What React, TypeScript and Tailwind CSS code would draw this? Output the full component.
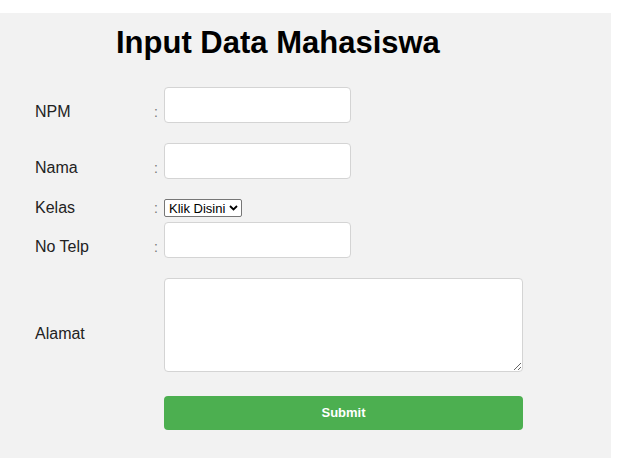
import * as React from 'react'

const font = { fontFamily: '"Liberation Sans", Arial, sans-serif' }

function Label({ text, colon = true }: { text: string; colon?: boolean }) {
  return (
    <>
      <span className="w-[119px] shrink-0 text-[16px] leading-[18px] text-[#222]">{text}</span>
      <span className="w-[10px] shrink-0 text-[14px] leading-[18px] text-[#777]">{colon ? ':' : ''}</span>
    </>
  )
}

function TextInput() {
  return (
    <input
      type="text"
      className="h-[36px] w-[187px] rounded-[4px] border border-[#d4d4d4] bg-white px-2 text-[13px] outline-none"
    />
  )
}

export default function App() {
  return (
    <div className="h-[463px] w-full bg-white pt-[13px]" style={font}>
      <div className="h-[445px] w-[611px] bg-[#f2f2f2]">
        <h1 className="pl-[116px] pt-[12px] text-[31px] font-bold leading-[36px] text-black">
          Input Data Mahasiswa
        </h1>

        <form className="flex flex-col pl-[35px]" onSubmit={(e) => e.preventDefault()}>
          {/* NPM */}
          <div className="mt-[26px] flex items-center">
            <Label text="NPM" />
            <div className="pb-[14px]">
              <TextInput />
            </div>
          </div>

          {/* Nama */}
          <div className="mt-[6px] flex items-center">
            <Label text="Nama" />
            <div className="pb-[14px]">
              <TextInput />
            </div>
          </div>

          {/* Kelas */}
          <div className="mt-[6px] flex items-center">
            <Label text="Kelas" />
            <div className="flex h-[18px] w-[78px] items-center justify-between rounded-[2px] border border-[#767676] bg-white pl-[4px] pr-[3px] text-[13px] leading-none text-black">
              <span>Klik Disini</span>
              <svg width="9" height="6" viewBox="0 0 9 6" fill="none">
                <path d="M1 1l3.5 3.5L8 1" stroke="#000" strokeWidth="1.8" />
              </svg>
            </div>
          </div>

          {/* No Telp */}
          <div className="mt-[5px] flex items-center">
            <Label text="No Telp" />
            <div className="pb-[14px]">
              <TextInput />
            </div>
          </div>

          {/* Alamat */}
          <div className="mt-[6px] flex items-center">
            <Label text="Alamat" colon={false} />
            <div className="flex pb-[18px]">
              <textarea
                className="h-[94px] w-[359px] rounded-[4px] border border-[#d4d4d4] bg-white p-2 text-[13px] outline-none"
                style={{ resize: 'both' }}
              />
            </div>
          </div>

          {/* Submit */}
          <div className="mt-[6px] flex">
            <div className="w-[129px] shrink-0" />
            <button
              type="submit"
              className="h-[34px] w-[359px] rounded-[4px] bg-[#4caf50] text-[13px] font-bold text-white"
            >
              Submit
            </button>
          </div>
        </form>
      </div>
    </div>
  )
}
